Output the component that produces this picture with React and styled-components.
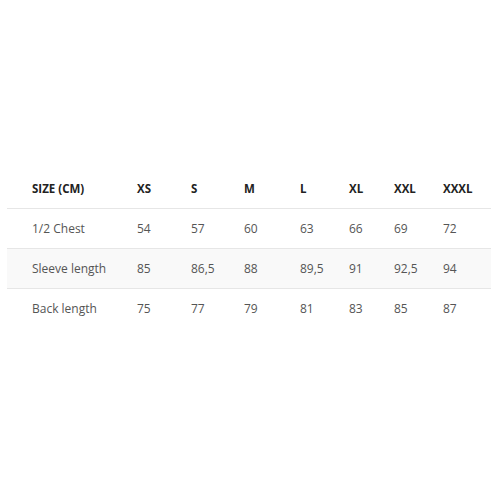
import styled, { createGlobalStyle } from "styled-components";

const GlobalStyle = createGlobalStyle`
  html, body {
    margin: 0;
    padding: 0;
    background: #ffffff;
  }
  body {
    font-family: "Open Sans", "Liberation Sans", sans-serif;
  }
`;

const Page = styled.div`
  width: 500px;
  height: 500px;
  padding: 168px 9px 0 7px;
  box-sizing: border-box;
`;

const Table = styled.table`
  width: 484px;
  border-collapse: collapse;
  table-layout: fixed;
  font-size: 12px;
`;

const Head = styled.th`
  height: 40px;
  padding: 0 0 0 ${(p) => (p.$first ? "25px" : "0")};
  text-align: left;
  font-weight: 700;
  font-size: 11.5px;
  color: #222222;
  border-bottom: 1px solid #e6e6e6;
`;

const Row = styled.tr`
  background: ${(p) => (p.$shade ? "#f9f9f9" : "#ffffff")};
  border-bottom: ${(p) => (p.$last ? "none" : "1px solid #e6e6e6")};
`;

const Cell = styled.td`
  height: 39px;
  padding: 0 0 0 ${(p) => (p.$first ? "25px" : "0")};
  color: #555555;
  white-space: nowrap;
`;

const widths = [130, 54, 53, 56, 49, 45, 49, 48];
const sizes = ["XS", "S", "M", "L", "XL", "XXL", "XXXL"];
const rows = [
  ["1/2 Chest", "54", "57", "60", "63", "66", "69", "72"],
  ["Sleeve length", "85", "86,5", "88", "89,5", "91", "92,5", "94"],
  ["Back length", "75", "77", "79", "81", "83", "85", "87"],
];

export default function App() {
  return (
    <>
      <GlobalStyle />
      <Page>
        <Table>
          <colgroup>
            {widths.map((w, i) => (
              <col key={i} style={{ width: w }} />
            ))}
          </colgroup>
          <thead>
            <tr>
              <Head $first>SIZE (CM)</Head>
              {sizes.map((s) => (
                <Head key={s}>{s}</Head>
              ))}
            </tr>
          </thead>
          <tbody>
            {rows.map((r, i) => (
              <Row key={r[0]} $shade={i === 1} $last={i === rows.length - 1}>
                {r.map((c, j) => (
                  <Cell key={j} $first={j === 0}>
                    {c}
                  </Cell>
                ))}
              </Row>
            ))}
          </tbody>
        </Table>
      </Page>
    </>
  );
}
